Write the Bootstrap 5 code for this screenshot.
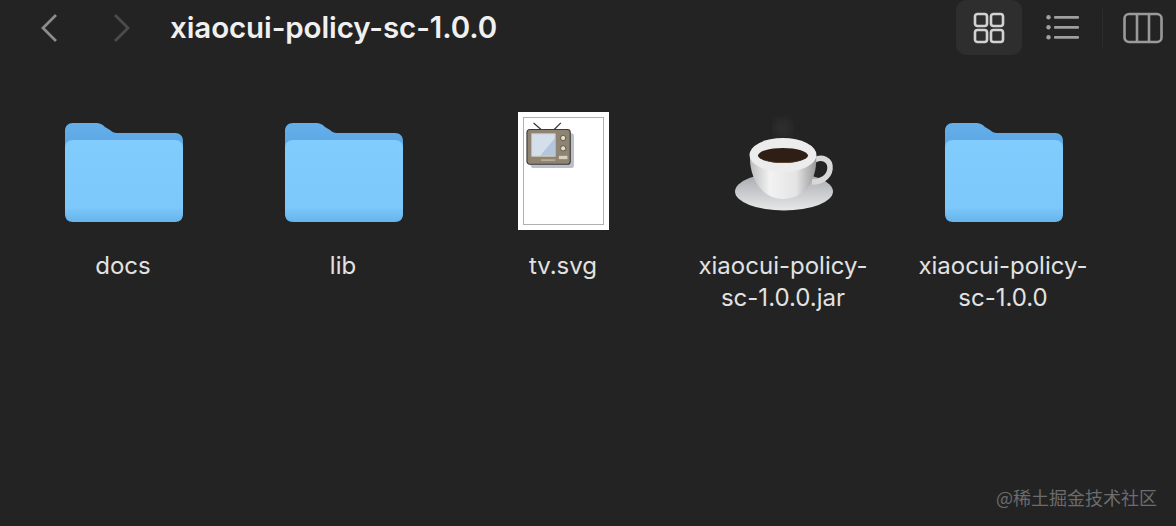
<!DOCTYPE html>
<html lang="zh">
<head>
    <meta charset="UTF-8">
    <title>xiaocui-policy-sc-1.0.0</title>
    <link href="https://cdn.jsdelivr.net/npm/bootstrap@5.3.0/dist/css/bootstrap.min.css" rel="stylesheet">
    <style>
        html, body { height: 100%; }
        body { background: #232323; color: #e6e6e6; font-family: Inter, "Liberation Sans", sans-serif; overflow: hidden; position: relative; }
        .tool-bar { height: 55px; padding-left: 40px; padding-right: 13px; }
        .nav-back { width: 18px; height: 30px; margin-right: 55px; }
        .nav-next { width: 18px; height: 30px; margin-right: 39px; }
        .path-title { font-size: 29.5px; font-weight: 600; letter-spacing: -0.1px; color: #f0f0f0; line-height: 55px; }
        .view-btn { height: 55px; width: 66px; border-radius: 10px; }
        .view-btn.is-on { background: #2e2e2e; }
        .view-btn.is-list { padding-left: 16px; }
        .view-gap { width: 1px; height: 38px; background: #2c2c2c; margin: 0 20px 0 14px; }
        .file-grid { padding: 57px 0 0 13px; }
        .file-item { width: 220px; }
        .file-icon { height: 118px; }
        .file-name { font-size: 24px; line-height: 32px; margin-top: 20px; color: #e2e2e2; }
        .svg-thumb { width: 91px; height: 118px; background: #fff; padding: 5px; }
        .svg-thumb-inner { width: 100%; height: 100%; border: 1px solid #b0b0b0; padding: 4px 1px; }
        .stamp { position: absolute; right: 19px; bottom: 17px; font-size: 18px; line-height: 24px; color: #6c6c6c; font-family: "Noto Sans CJK SC", Inter, sans-serif; }
    </style>
</head>
<body>
    <div class="tool-bar d-flex align-items-center">
        <svg class="nav-back" viewBox="0 0 18 30"><path d="M16 2 3 15l13 13" fill="none" stroke="#8c8c8c" stroke-width="2.8"/></svg>
        <svg class="nav-next" viewBox="0 0 18 30"><path d="M2 2l13 13L2 28" fill="none" stroke="#4b4b4b" stroke-width="2.8"/></svg>
        <div class="path-title flex-grow-1">xiaocui-policy-sc-1.0.0</div>
        <div class="view-btn is-on d-flex align-items-center justify-content-center">
            <svg width="32" height="32" viewBox="0 0 32 32" fill="none" stroke="#d2d2d2" stroke-width="2.6">
                <rect x="2" y="2" width="12" height="12" rx="2.5"/><rect x="18" y="2" width="12" height="12" rx="2.5"/>
                <rect x="2" y="18" width="12" height="12" rx="2.5"/><rect x="18" y="18" width="12" height="12" rx="2.5"/>
            </svg>
        </div>
        <div class="view-btn is-list d-flex align-items-center justify-content-center">
            <svg width="36" height="30" viewBox="0 0 36 30" fill="#a0a0a0">
                <circle cx="3.500" cy="4.200" r="2.200"/><rect x="9" y="3" width="25" height="2.800" rx="1"/>
                <circle cx="3.500" cy="14.200" r="2.200"/><rect x="9" y="13" width="25" height="2.800" rx="1"/>
                <circle cx="3.500" cy="24.200" r="2.200"/><rect x="9" y="23" width="25" height="2.800" rx="1"/>
            </svg>
        </div>
        <div class="view-gap"></div>
        <svg width="40" height="32" viewBox="0 0 40 32" fill="none" stroke="#9a9a9a" stroke-width="2.6">
            <rect x="1.500" y="2" width="37" height="28" rx="4.500"/><path d="M14 2v28M26 2v28"/>
        </svg>
    </div>

    <div class="file-grid d-flex">
        <div class="file-item text-center">
            <div class="file-icon d-flex justify-content-center align-items-center">
                <svg width="120" height="104" viewBox="0 0 120 104"><use href="#folder-icon"/></svg>
            </div>
            <div class="file-name">docs</div>
        </div>
        <div class="file-item text-center">
            <div class="file-icon d-flex justify-content-center align-items-center">
                <svg width="120" height="104" viewBox="0 0 120 104"><use href="#folder-icon"/></svg>
            </div>
            <div class="file-name">lib</div>
        </div>
        <div class="file-item text-center">
            <div class="file-icon d-flex justify-content-center">
                <div class="svg-thumb">
                    <div class="svg-thumb-inner">
                        <svg width="50" height="47" viewBox="0 0 53 50" class="d-block">
                            <defs><filter id="tvBlur"><feGaussianBlur stdDeviation=".8"/></filter></defs>
                            <path d="M9 1l8 7M38 1l-7 7" stroke="#333" stroke-width="1.300" fill="none"/>
                            <rect x="6" y="12" width="46" height="37" rx="3" fill="#b9c0cc" filter="url(#tvBlur)"/>
                            <rect x="2" y="8" width="46" height="37" rx="3" fill="#8f8473" stroke="#3d3a36" stroke-width="1.200"/>
                            <rect x="7" y="12.500" width="25" height="24" fill="#d5dfec" stroke="#c9c1b2"/>
                            <path d="M32 17v19H16z" fill="#b4c6dc"/>
                            <circle cx="40.500" cy="17" r="2.800" fill="#e7dfcd" stroke="#5a5346"/>
                            <circle cx="40.500" cy="28" r="2.800" fill="#e7dfcd" stroke="#5a5346"/>
                            <rect x="36" y="36" width="9" height="3.500" fill="#d8d0bf"/>
                            <rect x="17" y="40" width="15" height="1" fill="#d8d0bf"/>
                        </svg>
                    </div>
                </div>
            </div>
            <div class="file-name">tv.svg</div>
        </div>
        <div class="file-item text-center">
            <div class="file-icon d-flex justify-content-center align-items-center">
                <svg width="120" height="115" viewBox="0 0 120 115">
                    <defs>
                        <linearGradient id="cupGrad" x1="0" y1="0" x2="1" y2="0">
                            <stop offset="0" stop-color="#bdbdbd"/><stop offset=".3" stop-color="#f2f2f2"/>
                            <stop offset=".7" stop-color="#e4e4e4"/><stop offset="1" stop-color="#989898"/>
                        </linearGradient>
                        <linearGradient id="plateGrad" x1="0" y1="0" x2="0" y2="1">
                            <stop offset="0" stop-color="#a4a7ab"/><stop offset=".5" stop-color="#c6c8cb"/><stop offset="1" stop-color="#e8e8e8"/>
                        </linearGradient>
                        <filter id="steamBlur"><feGaussianBlur stdDeviation="5"/></filter>
                        <filter id="softEdge"><feGaussianBlur stdDeviation=".6"/></filter>
                    </defs>
                    <ellipse cx="60" cy="14" rx="9" ry="10" fill="#2d2d2d" filter="url(#steamBlur)"/>
                    <ellipse cx="61" cy="77.500" rx="49" ry="19" fill="url(#plateGrad)" filter="url(#softEdge)"/>
                    <path d="M92 46c6-4 16-1 15 9-1 9-10 13-18 13" fill="none" stroke="#d8d8d8" stroke-width="5.500"/>
                    <path d="M27 41c-1 20 9 43 33 44 25 0 35-24 33-44z" fill="url(#cupGrad)"/>
                    <ellipse cx="60" cy="41" rx="33.500" ry="17" fill="#ececec"/>
                    <ellipse cx="60" cy="41.500" rx="25" ry="7.500" fill="#2e1e14"/>
                    <path d="M42 46c10 3 26 3 36 0-8 4-28 4-36 0z" fill="#6a4a34"/>
                </svg>
            </div>
            <div class="file-name">xiaocui-policy-<br>sc-1.0.0.jar</div>
        </div>
        <div class="file-item text-center">
            <div class="file-icon d-flex justify-content-center align-items-center">
                <svg width="120" height="104" viewBox="0 0 120 104"><use href="#folder-icon"/></svg>
            </div>
            <div class="file-name">xiaocui-policy-<br>sc-1.0.0</div>
        </div>
    </div>

    <div class="stamp">@稀土掘金技术社区</div>

    <svg width="0" height="0" class="position-absolute">
        <defs>
            <linearGradient id="folderFront" x1="0" y1="0" x2="0" y2="1">
                <stop offset="0" stop-color="#80ccfd"/><stop offset=".82" stop-color="#7cc8fb"/><stop offset="1" stop-color="#66b4ec"/>
            </linearGradient>
            <linearGradient id="folderBack" x1="0" y1="0" x2="0" y2="1">
                <stop offset="0" stop-color="#66b0ea"/><stop offset="1" stop-color="#4f9ddb"/>
            </linearGradient>
            <g id="folder-icon">
                <path d="M2 12c0-5 3-8 8-8h22c5 0 7 1 10 4l5 3c2 2 4 3 7 3h58c5 0 8 3 8 8v30H2z" fill="url(#folderBack)"/>
                <path d="M2 29c0-5 3-8 8-8h102c5 0 8 3 8 8v66c0 5-3 8-8 8H10c-5 0-8-3-8-8z" fill="url(#folderFront)"/>
            </g>
        </defs>
    </svg>
</body>
</html>
